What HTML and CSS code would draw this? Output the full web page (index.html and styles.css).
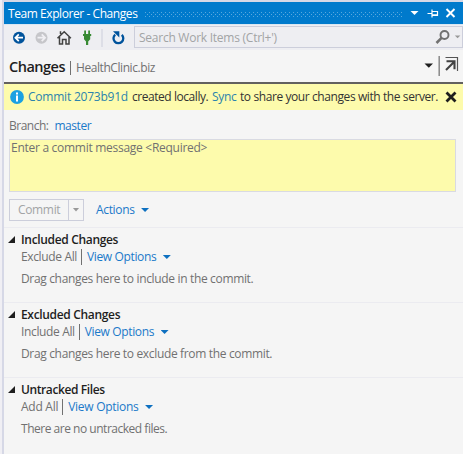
FILE: index.html
```
<!DOCTYPE html>
<html lang="en">
<head>
<meta charset="utf-8">
<title>Team Explorer - Changes</title>
<link rel="stylesheet" href="styles.css">
</head>
<body>
<div class="panel">
  <header class="titlebar">
    <span class="title">Team Explorer - Changes</span>
    <span class="grip"></span>
    <svg class="window-icons" width="53" height="22" viewBox="0 0 53 22">
      <path d="M0.500 9h8l-4 4z" fill="#fff"/>
      <path d="M17.500 11.500h4.500M22 7.500v8M22.500 9.500h5v4h-5M22.500 12.800h5" fill="none" stroke="#fff" stroke-width="1.200"/>
      <path d="M36.500 7l8 8M44.500 7l-8 8" stroke="#fff" stroke-width="1.900"/>
    </svg>
  </header>

  <nav class="toolbar">
    <svg class="nav-icons" width="130" height="26" viewBox="0 0 130 26">
      <circle cx="15" cy="13.700" r="6" fill="#00539c"/>
      <path d="M19 13.700h-7.500M14.800 10.300l-3.400 3.400 3.400 3.400" fill="none" stroke="#fff" stroke-width="1.700"/>
      <circle cx="37.500" cy="13.700" r="6" fill="#c6c6ca"/>
      <path d="M33.500 13.700h7.500M37.700 10.300l3.400 3.400-3.400 3.400" fill="none" stroke="#f0eff3" stroke-width="1.700"/>
      <path d="M53.500 14.200l6.700-6.500 6.700 6.500M55.500 13v7h3v-4.500h3.500V20h3v-7M56.500 10V7.300" fill="none" stroke="#424242" stroke-width="1.500"/>
      <path d="M79 10h8.200v2h-1v3.300l-2 2.200V21h-2.200v-3.500l-2-2.200V12h-1zM80.200 6.500h1.800V10h-1.800zM84.200 6.500h1.800V10h-1.800z" fill="#388a34"/>
      <path d="M98 5v18" stroke="#cccedb"/>
      <path d="M111.200 10.600a4.900 4.900 0 1 0 6.600 0.200" fill="none" stroke="#00539c" stroke-width="2.300"/>
      <path d="M109 7.200h6.300v6.300z" fill="#00539c"/>
    </svg>
    <div class="search">
      <span class="search-text">Search Work Items (Ctrl+')</span>
      <svg width="28" height="20" viewBox="0 0 28 20">
        <circle cx="10.500" cy="8" r="4" fill="none" stroke="#717171" stroke-width="1.900"/>
        <path d="M7.800 10.700L2.500 16" stroke="#717171" stroke-width="2.600"/>
        <path d="M20.800 8.500h5.500l-2.750 2.750z" fill="#999"/>
      </svg>
    </div>
  </nav>

  <div class="page-head">
    <h1>Changes</h1>
    <span class="head-rule"></span>
    <span class="project">HealthClinic.biz</span>
    <svg class="head-icons" width="40" height="32" viewBox="0 0 40 32">
      <path d="M1.500 13.500h8.500l-4.200 4.200z" fill="#1e1e1e"/>
      <path d="M16.200 6v20" stroke="#888" stroke-width="1.500"/>
      <path d="M22.500 7.500h12v13.500" fill="none" stroke="#555" stroke-width="1.200"/>
      <path d="M23 20l8-8M23.500 11.300h8v8" fill="none" stroke="#424242" stroke-width="2.100"/>
    </svg>
  </div>

  <div class="notice">
    <svg width="14" height="14" viewBox="0 0 14 14">
      <circle cx="7" cy="7" r="6.900" fill="#1ba1e2"/>
      <path d="M7 2.500v2M7 5.600v5.900" stroke="#fff" stroke-width="2"/>
    </svg>
    <p><a class="commit-id">Commit 2073b91d</a> <span class="created">created locally.</span> <a class="sync">Sync</a> <span class="share">to share your changes with the server.</span></p>
    <svg class="dismiss" width="12" height="12" viewBox="0 0 12 12"><path d="M1.500 1.500l9 9M10.500 1.500l-9 9" stroke="#1e1e1e" stroke-width="2.800"/></svg>
  </div>

  <div class="branch"><span>Branch:</span><a>master</a></div>
  <div class="message">Enter a commit message &lt;Required&gt;</div>
  <div class="actions">
    <div class="commit"><span class="commit-label">Commit</span><span class="commit-drop"><i class="caret muted"></i></span></div>
    <a>Actions</a><i class="caret"></i>
  </div>

  <section>
    <h2><i class="expander"></i>Included Changes</h2>
    <div class="options tight"><span>Exclude All</span><b class="bar"></b><a>View Options</a><i class="caret"></i></div>
    <p>Drag changes here to include in the commit.</p>
  </section>
  <section>
    <h2><i class="expander"></i>Excluded Changes</h2>
    <div class="options tight"><span>Include All</span><b class="bar"></b><a>View Options</a><i class="caret"></i></div>
    <p>Drag changes here to exclude from the commit.</p>
  </section>
  <section>
    <h2 class="untracked"><i class="expander"></i>Untracked Files</h2>
    <div class="options loose"><span>Add All</span><b class="bar"></b><a>View Options</a><i class="caret"></i></div>
    <p class="empty">There are no untracked files.</p>
  </section>
</div>
</body>
</html>
```
FILE: styles.css
```
* { box-sizing: border-box; }
body {
  margin: 0;
  background: #f0eff4;
  font: 12px/16px "Open Sans", "Noto Sans", sans-serif;
  letter-spacing: -0.34px;
  color: #717171;
  white-space: nowrap;
  overflow: hidden;
}
h1, h2, p { margin: 0; }
a { color: #1b79c9; }
svg { display: block; flex: none; }

.panel {
  height: 454px;
  margin-left: 2px;
  border-left: 2px solid #d6d8e6;
  border-top: 2px solid #d6d8e6;
  background: #f5f5f5;
}

.titlebar {
  display: flex;
  align-items: center;
  height: 22px;
  padding-left: 4px;
  background: #007acc;
  color: #fff;
}
.title { width: 130px; padding-top: 1px; letter-spacing: -0.43px; }
.grip {
  flex: 1;
  height: 5px;
  margin: 2px 8px 0 7px;
  background:
    radial-gradient(circle at 0.5px 0.5px, #59a8de 0.6px, transparent 0.8px) 0 0 / 4px 4px,
    radial-gradient(circle at 0.5px 0.5px, #59a8de 0.6px, transparent 0.8px) 2px 2px / 4px 4px;
}

.toolbar {
  display: flex;
  height: 26px;
  background: #eeeef2;
  border-top: 1px solid #d9e6f2;
}
.nav-icons { margin-top: -1px; }
.search {
  display: flex;
  flex: 1;
  align-items: center;
  justify-content: space-between;
  height: 22px;
  margin-top: 1px;
  padding-left: 4px;
  border: 1px solid #cccedb;
  color: #a2a4a5;
}
.search-text { padding-top: 1px; letter-spacing: -0.25px; }

.page-head {
  display: flex;
  align-items: center;
  height: 34px;
  padding-left: 5px;
  border-bottom: 2px solid #62605f;
}
.page-head h1 {
  width: 57px;
  padding-top: 2px;
  font-size: 14.5px;
  font-weight: 600;
  letter-spacing: -0.5px;
  color: #1e1e1e;
}
.head-rule { width: 1px; height: 14px; margin: 3px 5px 0 4px; background: #717171; }
.project { margin-top: 3px; letter-spacing: -0.43px; }
.head-icons { margin-left: auto; margin-right: 0; }

.notice {
  display: flex;
  align-items: center;
  height: 26px;
  padding: 0 6px;
  background: #fdfbac;
  color: #333;
}
.notice p { flex: 1; display: flex; margin-left: 4px; }
.notice a { color: #2b83ad; }
.commit-id { width: 104px; letter-spacing: -0.22px; }
.created { width: 80px; letter-spacing: -0.45px; }
.sync { width: 28px; }
.share { letter-spacing: -0.41px; }

.branch { display: flex; gap: 6px; height: 29px; padding: 8px 0 0 5px; letter-spacing: -0.5px; }
.branch a { letter-spacing: -0.45px; }
.message {
  height: 53px;
  margin: 0 7px 0 5px;
  padding: 0 1px;
  border: 1px solid #d9dae2;
  background: #fdfbac;
  letter-spacing: -0.28px;
}
.actions { display: flex; align-items: center; height: 35px; padding-left: 5px; }
.commit { display: flex; width: 75px; height: 22px; margin-right: 12px; border: 1px solid #cccedb; color: #a2a4a5; line-height: 20px; }
.commit-label { width: 58px; padding-left: 8px; }
.commit-drop { display: flex; align-items: center; justify-content: center; flex: 1; border-left: 1px solid #cccedb; }

.caret {
  width: 8px;
  height: 4px;
  margin: 1px 0 0 6.5px;
  background: #0e70c0;
  clip-path: polygon(0 0, 100% 0, 50% 100%);
}
.caret.muted { width: 7px; margin: 0; background: #999; }

section { height: 75px; padding: 4px 0 0 17px; border-top: 1px solid #ebebf0; }
h2 { display: flex; align-items: center; height: 16px; font-size: 12px; font-weight: 600; color: #1e1e1e; letter-spacing: -0.33px; }
.untracked { letter-spacing: -0.4px; }
.expander { width: 7px; height: 7px; margin: -1px 6px 0 -13px; background: #1e1e1e; clip-path: polygon(100% 0, 100% 100%, 0 100%); }
.options { display: flex; align-items: center; height: 17px; }
.options.tight { letter-spacing: -0.36px; }
.options.loose { letter-spacing: -0.27px; }
.bar { width: 1px; height: 16px; margin: 0 5px 0 4px; background: #717171; }
section p { margin-top: 6px; }
.empty { letter-spacing: -0.48px; }
```
